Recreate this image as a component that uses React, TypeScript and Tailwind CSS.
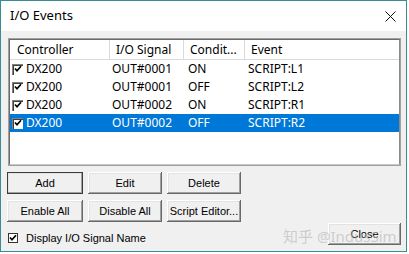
const rows = [
  { ctrl: "DX200", signal: "OUT#0001", cond: "ON", event: "SCRIPT:L1" },
  { ctrl: "DX200", signal: "OUT#0001", cond: "OFF", event: "SCRIPT:L2" },
  { ctrl: "DX200", signal: "OUT#0002", cond: "ON", event: "SCRIPT:R1" },
  { ctrl: "DX200", signal: "OUT#0002", cond: "OFF", event: "SCRIPT:R2" },
];

const btn =
  "h-[22px] bg-[#f0f0f0] text-[11px] text-black font-['Liberation_Sans',Arial,sans-serif] flex items-center justify-center shadow-[inset_-1px_-1px_#696969,inset_1px_1px_#ffffff,inset_-2px_-2px_#a0a0a0,inset_2px_2px_#e3e3e3]";

function Check({ small }: { small?: boolean }) {
  return (
    <span
      className={`inline-flex items-center justify-center bg-white shrink-0 ${
        small
          ? "w-[10px] h-[10px] border border-[#333]"
          : "w-[11px] h-[11px] shadow-[inset_1px_1px_#808080,inset_2px_2px_#404040,inset_-1px_-1px_#ffffff]"
      }`}
    >
      <svg width="8" height="8" viewBox="0 0 8 8">
        <path d="M1 3.5 L3 5.8 L7 1.2" fill="none" stroke="#000" strokeWidth="1.7" />
      </svg>
    </span>
  );
}

export default function App() {
  return (
    <div className="w-[409px] h-[254px] bg-white relative">
      <div className="w-[407px] h-[252px] border border-[#3a8c94] flex flex-col">
        {/* title bar */}
        <div className="h-[30px] bg-white flex items-center justify-between pl-[9px] pr-[10px] shrink-0">
          <span className="text-[13px] text-black font-['Noto_Sans',sans-serif]">I/O Events</span>
          <svg width="11" height="11" viewBox="0 0 11 11">
            <path d="M0.5 0.5 L10.5 10.5 M10.5 0.5 L0.5 10.5" stroke="#111" strokeWidth="1" />
          </svg>
        </div>

        {/* body */}
        <div className="flex-1 bg-[#f0f0f0] flex flex-col pl-[6px] pr-[5px] pt-[7px]">
          {/* list view */}
          <div className="ml-[1px] h-[128px] border border-[#a0a0a0] bg-white">
            <div className="h-full border border-[#6a6a6a] border-r-[#8a8a8a] border-b-[#c8c8c8] bg-white font-['Noto_Sans',sans-serif] text-[12px] text-black">
              <div className="h-[20px] flex items-center border-b border-[#d9d9d9]">
                <div className="w-[100px] h-full flex items-center pl-[7px] border-r border-[#d9d9d9]">Controller</div>
                <div className="w-[74px] h-full flex items-center pl-[6px] border-r border-[#d9d9d9]">I/O Signal</div>
                <div className="w-[61px] h-full flex items-center pl-[6px] border-r border-[#d9d9d9]">Condit...</div>
                <div className="flex-1 h-full flex items-center pl-[6px]">Event</div>
              </div>
              {rows.map((r, i) => {
                const sel = i === rows.length - 1;
                return (
                  <div
                    key={i}
                    className={`h-[18px] flex items-center ${sel ? "bg-[#0078d7] text-white" : ""}`}
                  >
                    <div className="w-[100px] flex items-center pl-[2px] gap-[3px]">
                      <Check />
                      <span>{r.ctrl}</span>
                    </div>
                    <div className="w-[74px] pl-[2px]">{r.signal}</div>
                    <div className="w-[61px] pl-[4px]">{r.cond}</div>
                    <div className="flex-1 pl-[3px]">{r.event}</div>
                  </div>
                );
              })}
            </div>
          </div>

          {/* buttons */}
          <div className="mt-[6px] flex gap-[5px]">
            <button className={`${btn} w-[76px] outline outline-1 outline-[#3c3c3c] -outline-offset-1`}>Add</button>
            <button className={`${btn} w-[74px]`}>Edit</button>
            <button className={`${btn} w-[74px]`}>Delete</button>
          </div>
          <div className="mt-[6px] flex gap-[5px]">
            <button className={`${btn} w-[76px]`}>Enable All</button>
            <button className={`${btn} w-[74px]`}>Disable All</button>
            <button className={`${btn} w-[74px]`}>Script Editor...</button>
          </div>

          <div className="mt-[1px] flex items-start justify-between">
            <label className="mt-[7px] ml-[1px] flex items-center gap-[8px] text-[11px] text-black font-['Liberation_Sans',Arial,sans-serif]">
              <Check small />
              <span>Display I/O Signal Name</span>
            </label>
            <button className={`${btn} w-[73px]`}>Close</button>
          </div>
        </div>
      </div>

      {/* watermark */}
      <div className="absolute left-[283px] top-[225px] text-[15px] text-[#bdbdbd]/70 font-['Noto_Sans','Noto_Sans_CJK_SC',sans-serif] whitespace-nowrap pointer-events-none">
        知乎 @IndusSim
      </div>
    </div>
  );
}
